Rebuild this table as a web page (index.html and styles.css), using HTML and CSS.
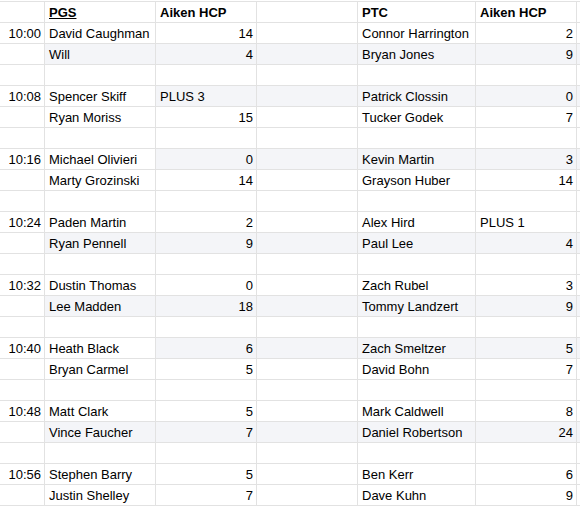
FILE: index.html
```html
<!DOCTYPE html>
<html>
<head>
<meta charset="utf-8">
<link rel="stylesheet" href="styles.css">
</head>
<body>
<div class="sheet">
  <div class="row"><div class="c"></div><div class="c b"><u>PGS</u></div><div class="c b">Aiken HCP</div><div class="c"></div><div class="c b">PTC</div><div class="c b">Aiken HCP</div><div class="c"></div></div>

  <div class="row"><div class="c t">10:00</div><div class="c">David Caughman</div><div class="c n">14</div><div class="c"></div><div class="c">Connor Harrington</div><div class="c n">2</div><div class="c"></div></div>
  <div class="row"><div class="c"></div><div class="c g">Will</div><div class="c n g">4</div><div class="c g"></div><div class="c g">Bryan Jones</div><div class="c n g">9</div><div class="c g"></div></div>
  <div class="row"><div class="c"></div><div class="c"></div><div class="c"></div><div class="c"></div><div class="c"></div><div class="c"></div><div class="c"></div></div>

  <div class="row"><div class="c t">10:08</div><div class="c">Spencer Skiff</div><div class="c g">PLUS 3</div><div class="c g"></div><div class="c g">Patrick Clossin</div><div class="c n g">0</div><div class="c g"></div></div>
  <div class="row"><div class="c"></div><div class="c">Ryan Moriss</div><div class="c n">15</div><div class="c"></div><div class="c">Tucker Godek</div><div class="c n">7</div><div class="c"></div></div>
  <div class="row"><div class="c"></div><div class="c"></div><div class="c"></div><div class="c"></div><div class="c"></div><div class="c"></div><div class="c"></div></div>

  <div class="row"><div class="c t">10:16</div><div class="c">Michael Olivieri</div><div class="c n g">0</div><div class="c g"></div><div class="c g">Kevin Martin</div><div class="c n g">3</div><div class="c g"></div></div>
  <div class="row"><div class="c"></div><div class="c">Marty Grozinski</div><div class="c n">14</div><div class="c"></div><div class="c">Grayson Huber</div><div class="c n">14</div><div class="c"></div></div>
  <div class="row"><div class="c"></div><div class="c"></div><div class="c"></div><div class="c"></div><div class="c"></div><div class="c"></div><div class="c"></div></div>

  <div class="row"><div class="c t">10:24</div><div class="c">Paden Martin</div><div class="c n">2</div><div class="c"></div><div class="c">Alex Hird</div><div class="c">PLUS 1</div><div class="c"></div></div>
  <div class="row"><div class="c"></div><div class="c g">Ryan Pennell</div><div class="c n g">9</div><div class="c g"></div><div class="c g">Paul Lee</div><div class="c n g">4</div><div class="c g"></div></div>
  <div class="row"><div class="c"></div><div class="c"></div><div class="c"></div><div class="c"></div><div class="c"></div><div class="c"></div><div class="c"></div></div>

  <div class="row"><div class="c t">10:32</div><div class="c">Dustin Thomas</div><div class="c n">0</div><div class="c"></div><div class="c">Zach Rubel</div><div class="c n">3</div><div class="c"></div></div>
  <div class="row"><div class="c"></div><div class="c g">Lee Madden</div><div class="c n g">18</div><div class="c g"></div><div class="c g">Tommy Landzert</div><div class="c n g">9</div><div class="c g"></div></div>
  <div class="row"><div class="c"></div><div class="c"></div><div class="c"></div><div class="c"></div><div class="c"></div><div class="c"></div><div class="c"></div></div>

  <div class="row"><div class="c t">10:40</div><div class="c">Heath Black</div><div class="c n g">6</div><div class="c g"></div><div class="c g">Zach Smeltzer</div><div class="c n g">5</div><div class="c g"></div></div>
  <div class="row"><div class="c"></div><div class="c">Bryan Carmel</div><div class="c n">5</div><div class="c"></div><div class="c">David Bohn</div><div class="c n">7</div><div class="c"></div></div>
  <div class="row"><div class="c"></div><div class="c"></div><div class="c"></div><div class="c"></div><div class="c"></div><div class="c"></div><div class="c"></div></div>

  <div class="row"><div class="c t">10:48</div><div class="c">Matt Clark</div><div class="c n">5</div><div class="c"></div><div class="c">Mark Caldwell</div><div class="c n">8</div><div class="c"></div></div>
  <div class="row"><div class="c"></div><div class="c g">Vince Faucher</div><div class="c n g">7</div><div class="c g"></div><div class="c g">Daniel Robertson</div><div class="c n g">24</div><div class="c g"></div></div>
  <div class="row"><div class="c"></div><div class="c"></div><div class="c"></div><div class="c"></div><div class="c"></div><div class="c"></div><div class="c"></div></div>

  <div class="row"><div class="c t">10:56</div><div class="c">Stephen Barry</div><div class="c n">5</div><div class="c"></div><div class="c">Ben Kerr</div><div class="c n">6</div><div class="c"></div></div>
  <div class="row"><div class="c"></div><div class="c">Justin Shelley</div><div class="c n">7</div><div class="c"></div><div class="c">Dave Kuhn</div><div class="c n">9</div><div class="c"></div></div>
</div>
</body>
</html>
```
FILE: styles.css
```css
html, body {
  margin: 0;
  padding: 0;
  background: #ffffff;
}
body {
  font-family: "Liberation Sans", Arial, sans-serif;
  font-size: 13px;
  color: #000000;
  width: 580px;
  height: 508px;
  overflow: hidden;
}
.sheet {
  padding-top: 1px;
}
.row {
  display: grid;
  grid-template-columns: 45px 111px 101px 101px 118px 101px 1fr;
  height: 21px;
}
.row:first-child .c {
  border-top: 1px solid #e2e2e2;
  height: 22px;
}
.row:first-child {
  height: 22px;
}
.c {
  box-sizing: border-box;
  height: 21px;
  border-right: 1px solid #e2e2e2;
  border-bottom: 1px solid #e2e2e2;
  line-height: 20px;
  padding: 1px 4px 0 4px;
  white-space: nowrap;
  overflow: visible;
  background: #ffffff;
}
.c:last-child {
  border-right: none;
}
.t, .n {
  text-align: right;
  padding-right: 3px;
  padding-left: 0;
}
.b {
  font-weight: bold;
}
.g {
  background: #f4f5f8;
}
```
